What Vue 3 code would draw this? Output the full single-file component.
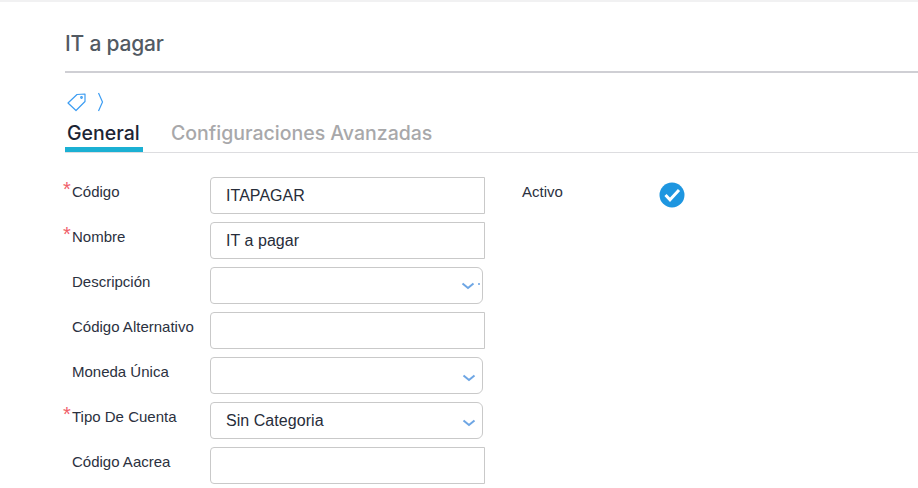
<script setup>
const rows = [
  { label: 'Código', required: true, value: 'ITAPAGAR', type: 'input' },
  { label: 'Nombre', required: true, value: 'IT a pagar', type: 'input' },
  { label: 'Descripción', value: '', type: 'multi' },
  { label: 'Código Alternativo', value: '', type: 'input' },
  { label: 'Moneda Única', value: '', type: 'select' },
  { label: 'Tipo De Cuenta', required: true, value: 'Sin Categoria', type: 'select' },
  { label: 'Código Aacrea', value: '', type: 'input' },
]
</script>

<template>
  <div class="page">
    <div class="topbar"></div>
    <main class="content">
      <h1 class="title">IT a pagar</h1>
      <div class="crumbs">
        <svg width="20" height="20" viewBox="0 0 20 20" fill="none" stroke="#3d9df2" stroke-width="1.2" stroke-linejoin="round">
          <path d="M2 11 11 2.500 19 2v7.500L10 18.500z" />
          <circle cx="15.500" cy="5.500" r="0.8" />
        </svg>
        <svg class="crumb-sep" width="8" height="20" viewBox="0 0 8 20" fill="none" stroke="#3d9df2" stroke-width="1.2">
          <path d="M1.500 1 5.500 10 1.500 19" />
        </svg>
      </div>
      <nav class="tabs">
        <span class="tab active">General</span>
        <span class="tab">Configuraciones Avanzadas</span>
      </nav>
      <section class="form">
        <div class="fields">
          <div v-for="row in rows" :key="row.label" class="row">
            <label class="label">
              <span v-if="row.required" class="star">*</span>{{ row.label }}
            </label>
            <div v-if="row.type === 'input'" class="control">{{ row.value }}</div>
            <div v-else class="control select" :class="{ multi: row.type === 'multi' }">
              {{ row.value }}
              <svg class="chev" width="14" height="8" viewBox="0 0 14 8" fill="none" stroke="#6ea6e4" stroke-width="2">
                <path d="M1.500 1.500 7 6l5.500-4.500" />
              </svg>
              <i v-if="row.type === 'multi'" class="tick"></i>
            </div>
          </div>
        </div>
        <div class="side">
          <span class="side-label">Activo</span>
          <svg width="26" height="26" viewBox="0 0 26 26">
            <circle cx="13" cy="13" r="12.500" fill="#1e96e0" />
            <path d="M6.500 13 11 17.800 20 8" fill="none" stroke="#fff" stroke-width="3" />
          </svg>
        </div>
      </section>
    </main>
  </div>
</template>

<style>
html, body { margin: 0; background: #fff; overflow: hidden; }
</style>

<style scoped>
.page {
  width: 918px;
  height: 488px;
  overflow: hidden;
  background: #fff;
  font-family: "Liberation Sans", Arial, sans-serif;
}
.topbar {
  height: 2px;
  background: #f1f1f2;
}
.content {
  padding-left: 65px;
}
.title {
  margin: 0;
  height: 71px;
  box-sizing: border-box;
  padding-top: 29px;
  border-bottom: 2px solid #cfcfd4;
  font: 500 21px/25px Inter, sans-serif;
  letter-spacing: -0.2px;
  color: #525a63;
}
.crumbs {
  display: flex;
  align-items: center;
  gap: 11px;
  height: 20px;
  padding: 19px 0 0 1px;
}
.tabs {
  display: flex;
  gap: 28px;
  height: 41px;
  box-sizing: border-box;
  padding-top: 9px;
  border-bottom: 1px solid #dddde0;
}
.tab {
  box-sizing: border-box;
  height: 31px;
  font: 500 19.500px/24px Inter, sans-serif;
  color: #a8a8aa;
}
.tab.active {
  width: 78px;
  padding-left: 2px;
  color: #1c2434;
  border-bottom: 5px solid #1bb0d3;
  white-space: nowrap;
}
.form {
  display: flex;
  padding-top: 24px;
}
.fields {
  display: flex;
  flex-direction: column;
  gap: 8px;
  width: 457px;
}
.row {
  display: flex;
  height: 37px;
}
.label {
  position: relative;
  width: 145px;
  padding: 6px 0 0 7px;
  box-sizing: border-box;
  font-size: 15px;
  line-height: 17px;
  color: #2b3140;
  white-space: nowrap;
}
.star {
  position: absolute;
  left: -2px;
  top: 4px;
  font-size: 20px;
  line-height: 17px;
  color: #f0606a;
}
.control {
  position: relative;
  box-sizing: border-box;
  width: 275px;
  height: 37px;
  padding: 0 15px;
  border: 1px solid #c9c9c9;
  border-radius: 4px 0 0 4px;
  font-size: 16px;
  line-height: 35px;
  letter-spacing: 0.05px;
  color: #272d3a;
}
.select {
  width: 273px;
  border-radius: 4px 6px 6px 4px;
}
.chev {
  position: absolute;
  right: 6px;
  top: 16px;
}
.multi .chev {
  right: 7px;
  top: 14px;
}
.tick {
  position: absolute;
  right: 2px;
  top: 15px;
  width: 2px;
  height: 2px;
  background: #8db9ea;
}
.side {
  display: flex;
  justify-content: space-between;
  align-items: flex-start;
  width: 163px;
  padding-top: 6px;
  font-size: 15px;
  line-height: 17px;
  color: #2b3140;
}
.side-label {
  display: block;
}
.side svg {
  margin-top: -1px;
}
</style>
